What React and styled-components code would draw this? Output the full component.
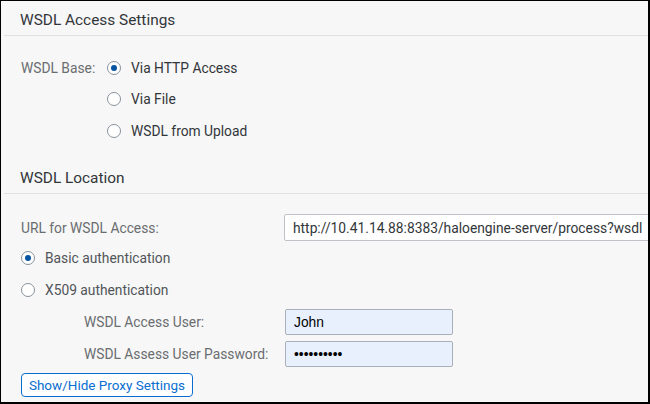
import React from "react";
import styled, { createGlobalStyle } from "styled-components";

const FONT = `Roboto, "Liberation Sans", Arial, sans-serif`;

const Global = createGlobalStyle`
  html, body { margin: 0; padding: 0; background: #f7f7f7; }
  body { font-family: ${FONT}; }
  * { box-sizing: border-box; }
`;

const Frame = styled.div`
  width: 650px;
  height: 404px;
  background: #f7f7f7;
  border-top: 1px solid #000;
  border-left: 1px solid #000;
  border-right: 2px solid #000;
  border-bottom: 2px solid #000;
  padding-left: 3px;
  overflow: hidden;
  display: flex;
  flex-direction: column;
`;

const SectionHeader = styled.div`
  height: 35px;
  padding: 4px 0 0 16px;
  margin-top: ${(p) => p.$gap || 0}px;
  border-bottom: 1px solid #e1e1e1;
  display: flex;
  align-items: center;
  font-size: 15.4px;
  color: #32363a;
  flex-shrink: 0;
`;

const BaseGroup = styled.div`
  display: grid;
  grid-template-columns: 86px auto;
  grid-auto-rows: 31.5px;
  padding: 16px 0 0 17px;
  align-items: center;
`;

const Label = styled.span`
  font-size: 13.8px;
  color: #6a6d70;
  white-space: nowrap;
  width: ${(p) => p.$w}px;
  flex-shrink: 0;
`;

const RadioWrap = styled.label`
  grid-column: ${(p) => (p.$col ? p.$col : "auto")};
  display: flex;
  align-items: center;
  gap: 10px;
  font-size: 13.8px;
  color: ${(p) => (p.$soft ? "#515559" : "#32363a")};
  height: ${(p) => (p.$h ? `${p.$h}px` : "auto")};
  margin-top: ${(p) => p.$mt || 0}px;
  white-space: nowrap;
  flex-shrink: 0;
`;

const Circle = styled.span`
  width: 14px;
  height: 14px;
  border-radius: 50%;
  border: 1px solid #89919a;
  background: #fff;
  display: flex;
  align-items: center;
  justify-content: center;
  flex-shrink: 0;
  &::after {
    content: "";
    width: 6px;
    height: 6px;
    border-radius: 50%;
    background: ${(p) => (p.$on ? "#0854a0" : "transparent")};
  }
`;

const LocationBody = styled.div`
  display: flex;
  flex-direction: column;
  padding-left: 17px;
`;

const FieldRow = styled.div`
  display: flex;
  align-items: center;
  height: ${(p) => p.$h}px;
  margin-top: ${(p) => p.$mt || 0}px;
  padding-left: ${(p) => p.$indent || 0}px;
  flex-shrink: 0;
`;

const TextInput = styled.input`
  height: 100%;
  width: ${(p) => p.$w}px;
  flex-shrink: 0;
  border: 1px solid ${(p) => (p.$auto ? "#a9b0b7" : "#bfc3c7")};
  border-radius: 2px;
  background: ${(p) => (p.$auto ? "#e8f0fe" : "#fff")};
  color: ${(p) => (p.$auto ? "#000" : "#32363a")};
  font-family: ${(p) => (p.$auto ? `"Liberation Sans", Arial, sans-serif` : FONT)};
  font-size: 13.8px;
  padding: 0 8px;
  outline: none;
`;

const ProxyButton = styled.button`
  align-self: flex-start;
  margin-top: 6px;
  height: 24px;
  width: 172px;
  padding: 0;
  border: 1px solid #0a6ed1;
  border-radius: 4px;
  background: #fff;
  color: #0a6ed1;
  font-family: ${FONT};
  font-size: 13.5px;
  white-space: nowrap;
  cursor: pointer;
`;

function Radio({ on, children, col, h, soft, mt }) {
  return (
    <RadioWrap $col={col} $h={h} $soft={soft} $mt={mt}>
      <Circle $on={on} />
      <span>{children}</span>
    </RadioWrap>
  );
}

export default function App() {
  return (
    <>
      <Global />
      <Frame>
        <SectionHeader>WSDL Access Settings</SectionHeader>
        <BaseGroup>
          <Label>WSDL Base:</Label>
          <Radio on>Via HTTP Access</Radio>
          <Radio col="2">Via File</Radio>
          <Radio col="2">WSDL from Upload</Radio>
        </BaseGroup>
        <SectionHeader $gap={12.5}>WSDL Location</SectionHeader>
        <LocationBody>
          <FieldRow $h={27} $mt={20}>
            <Label $w={263}>URL for WSDL Access:</Label>
            <TextInput
              $w={380}
              readOnly
              value="http://10.41.14.88:8383/haloengine-server/process?wsdl"
            />
          </FieldRow>
          <Radio on soft h={32} mt={1}>Basic authentication</Radio>
          <Radio soft h={32}>X509 authentication</Radio>
          <FieldRow $h={26} $mt={3} $indent={63}>
            <Label $w={201}>WSDL Access User:</Label>
            <TextInput $w={168} $auto readOnly value="John" />
          </FieldRow>
          <FieldRow $h={26} $mt={6} $indent={63}>
            <Label $w={201}>WSDL Assess User Password:</Label>
            <TextInput $w={168} $auto readOnly type="password" value="abcdefghij" />
          </FieldRow>
          <ProxyButton>Show/Hide Proxy Settings</ProxyButton>
        </LocationBody>
      </Frame>
    </>
  );
}
